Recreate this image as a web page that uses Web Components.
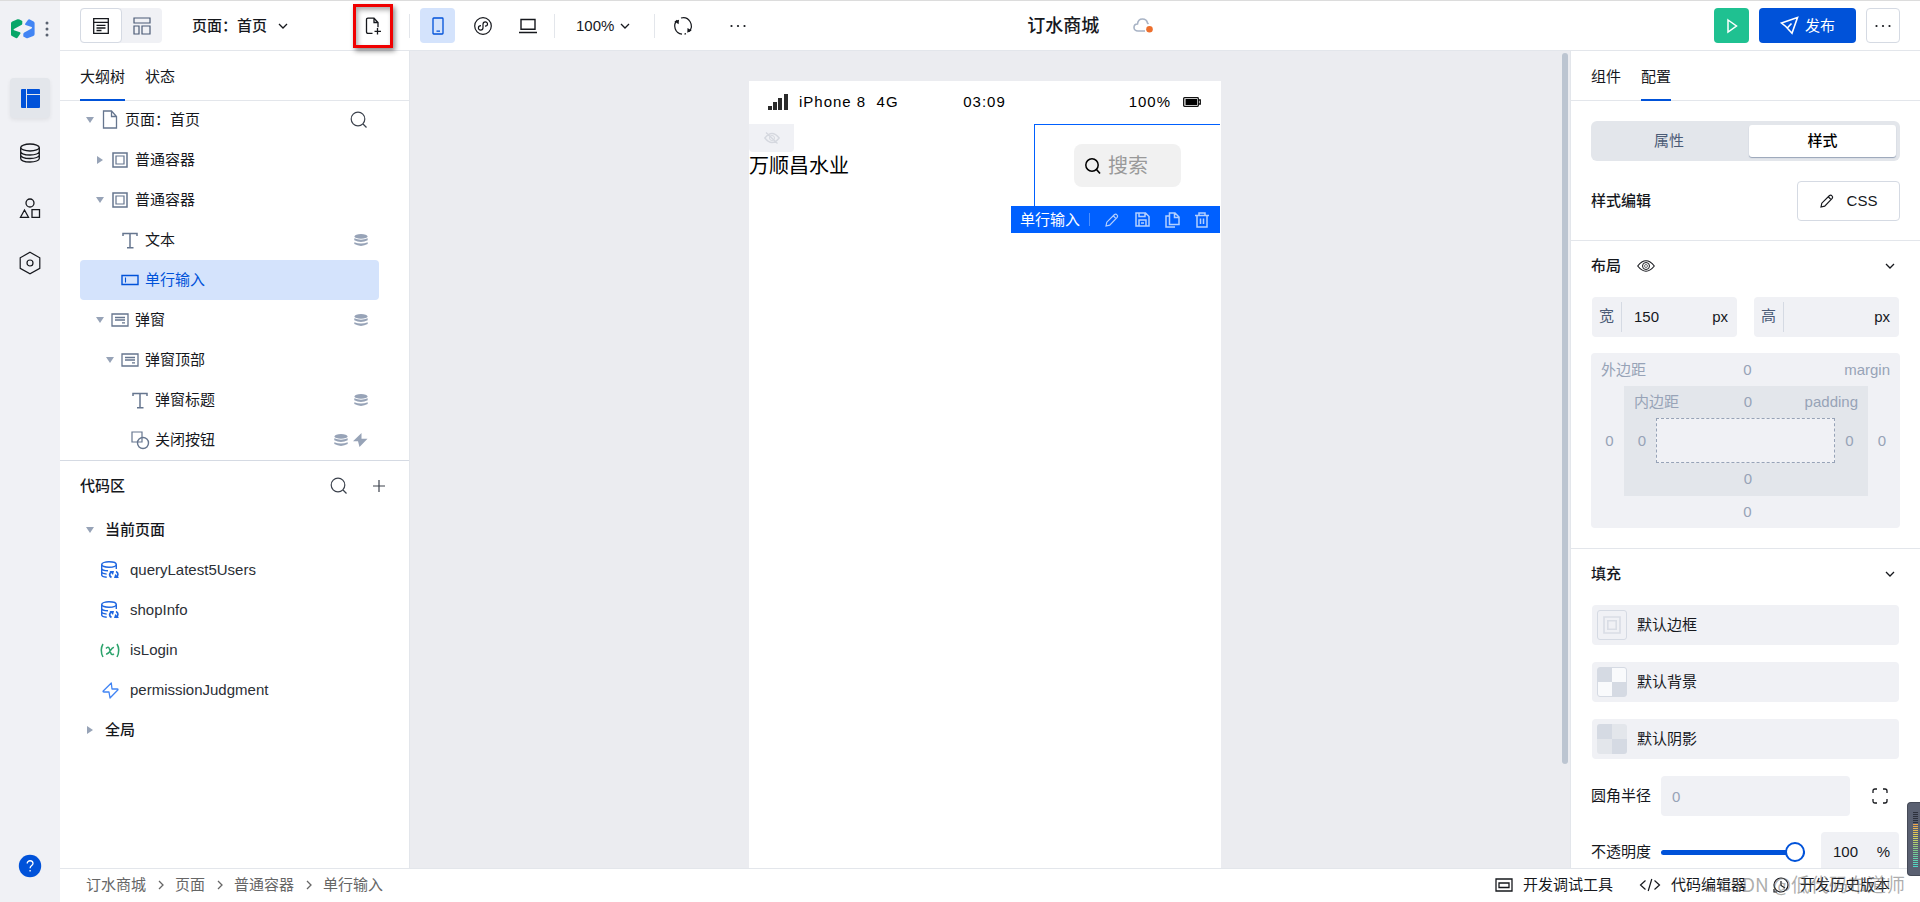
<!DOCTYPE html>
<html lang="zh-CN">
<head>
<meta charset="utf-8">
<title>订水商城</title>
<style>
  html, body { margin: 0; height: 100%; }
  body {
    font: 15px/20px "Liberation Sans", "Noto Sans CJK SC", sans-serif;
    color: #16181d;
    --line: #e3e6eb; --soft: #f0f1f5; --blue: #0052d9; --muted: #97a3b7; --slate: #4b5b76;
    background: #fff;
  }
</style>
</head>
<body>
<low-code-app></low-code-app>
<script>
const LOGO_HALF = 'M0 4.500Q0 3 1.300 2.500L6.500.3Q7.500 0 8.500.5L11.300 2V4.500Q11.300 5.500 10.300 6L3 10Q2 10.800 3 11.300L9 13.300Q10 13.800 9.300 14.800L6.500 18.700Q5.800 19.500 4.800 19L1 17Q0 16.500 0 15.500Z';
const ICONS = {
  logo: [24, 20, `<g stroke="none"><path fill="#07a668" d="${LOGO_HALF}"/><path fill="#4285f4" transform="rotate(180 11.800 9.700)" d="${LOGO_HALF}"/></g>`],
  vdots: [4, 16, '<g fill="currentColor" stroke="none"><circle cx="2" cy="2" r="1.500"/><circle cx="2" cy="8" r="1.500"/><circle cx="2" cy="14" r="1.500"/></g>'],
  layout: [20, 20, '<g fill="currentColor" stroke="none"><path d="M1 2q0-1 1-1h4v19H2q-1 0-1-1z"/><path d="M7 1h12q1 0 1 1v4H7z"/><path d="M7 7h13v12q0 1-1 1H7z"/></g>'],
  database: [22, 20, '<g stroke-width="1.300"><ellipse cx="11" cy="4.500" rx="9.300" ry="3.500"/><path d="M1.700 4.500v11c0 2 4 3.500 9.300 3.500s9.300-1.500 9.300-3.500v-11M1.700 8.500c0 2 4 3.500 9.300 3.500s9.300-1.500 9.300-3.500M1.700 12c0 2 4 3.500 9.300 3.500s9.300-1.500 9.300-3.500"/></g>'],
  shapes: [22, 22, '<g stroke-width="1.300"><circle cx="11" cy="6" r="4"/><path d="M5.500 13 1.500 20.300h8zM13 12.700h7.500v7.600H13z"/></g>'],
  hexagon: [22, 24, '<g stroke-width="1.200"><path d="M11 1.300 20.800 6.800v10.600L11 22.700 1.200 17.400V6.800z"/><circle cx="11" cy="12" r="3"/></g>'],
  help: [24, 24, '<circle cx="12" cy="12" r="11.200" fill="#0052d9" stroke="none"/><path stroke="#fff" stroke-width="1.300" d="M9.200 9.500c0-3.800 5.800-3.500 5.800 0 0 2-2.900 2.300-2.900 4.700M12.100 16v1.500"/>'],
  listView: [16, 16, '<path stroke-width="1.300" d="M.7.700h14.600v14.600H.7zM.7 4.300h14.600M3.500 7.300h9M3.500 10h9M3.500 12.500h5"/>'],
  blocks: [18, 18, '<path stroke-width="1.200" d="M1 1h16v5H1zM1 9h5v8H1zM9 9h8v8H9z"/>'],
  chevron: [10, 10, '<path stroke-width="1.300" d="M1 3l4 4 4-4"/>'],
  chevronRight: [8, 10, '<path stroke-width="1.300" d="M2 1l4 4-4 4"/>'],
  pageAdd: [17, 18, '<path stroke-width="1.300" d="M7.500 16.300H3q-1.500 0-1.500-1.500V2.700Q1.500 1.200 3 1.200h6l4 4.300v4.800M9 1.200v4.300h4M12.500 11v6.500M9.500 14.300H16"/>'],
  phone: [12, 18, '<path stroke-width="1.300" d="M1.700 1h8.600q.7 0 .7.700v14.600q0 .7-.7.700H1.700q-.7 0-.7-.7V1.700Q1 1 1.700 1zM4.500 14.200h3.500"/>'],
  mini: [18, 18, '<circle cx="9" cy="9" r="8.300" stroke-width="1.200"/><path stroke-width="1.200" d="M7 8.700c-3.500 0-3.300 4.400-.4 4.400C8.200 13.100 9 12.100 9 10.700V7.200C9 5.800 9.900 4.900 11.300 4.900c2.900 0 3.100 4.300-.3 4.300"/>'],
  laptop: [18, 16, '<path stroke-width="1.400" d="M2 1.500h14v9.700H2zM0 14.500h18"/>'],
  refresh: [18, 18, '<path stroke-width="1.200" d="M3.200 3.200A8.200 8.200 0 0 0 8 17.200M7 1A8.200 8.200 0 0 1 15 14.600M10.500 17.100l1.500-.4"/><path fill="currentColor" stroke="none" d="M.3 4.200 5 2.700 4.600 7.300zM17.700 13.500l-4.400 2.300.2-4.700z"/>'],
  dots: [16, 4, '<g fill="currentColor" stroke="none"><circle cx="1.500" cy="2" r="1.100"/><circle cx="8" cy="2" r="1.100"/><circle cx="14.500" cy="2" r="1.100"/></g>'],
  cloud: [21, 16, '<path stroke="#a8b3c5" stroke-width="1.600" d="M12 13H5C2.500 13 1 11.500 1 9.500 1 7.500 2.500 6 4.500 6 4.800 3 7 1 9.500 1c2.500 0 4.500 1.700 5 4l1 1"/><circle cx="16.500" cy="11.300" r="3.300" fill="#ed6f2d" stroke="none"/>'],
  play: [12, 16, '<path stroke-width="1.500" d="M2 2l8.500 6L2 14z"/>'],
  send: [19, 19, '<path stroke-width="1.600" d="M17.500 1.500 1.500 7l4.300 3.500L12 17.200zM11.500 7.500l-4.700 5"/>'],
  page: [16, 19, '<path stroke-width="1.300" d="M1.500 1h8L14.500 6.500V18h-13zM9.500 1v5.500h5"/>'],
  container: [16, 16, '<path stroke-width="1.500" d="M1 1h14v14H1z"/><path stroke-width="1.200" d="M4 4h8v8H4z"/>'],
  frame: [18, 18, '<path stroke-width="1.600" d="M1 1h16v16H1zM4.800 4.800h8.400v8.400H4.800z"/>'],
  text: [16, 17, '<path stroke-width="1.500" d="M1 4V1.500h14V4M8 1.500V15.500M5 15.700h6.500"/>'],
  input: [18, 12, '<path stroke-width="1.400" d="M1 1.500h16v9H1z"/><path stroke-width="1.100" d="M4.500 3.500v5"/>'],
  dialog: [18, 14, '<path stroke-width="1.300" d="M1 1h16v12H1z"/><path stroke-width="1.300" d="M4 4.500h10M4 7h10M11 9.800h3"/>'],
  button: [18, 18, '<path stroke-width="1.200" d="M1 1h10v10H1z"/><circle cx="12" cy="12" r="5.500" stroke-width="1.400"/>'],
  down: [8, 6, '<path fill="currentColor" stroke="none" d="M0 0h8L4 6z"/>'],
  right: [6, 8, '<path fill="currentColor" stroke="none" d="M0 0l6 4-6 4z"/>'],
  search: [18, 18, '<circle cx="8" cy="8" r="6.800" stroke-width="1.200"/><path stroke-width="1.200" d="M13 13l3.500 3.500"/>'],
  searchBold: [16, 16, '<circle cx="7" cy="7" r="6.200" stroke-width="1.500"/><path stroke-width="1.600" d="M11.500 11.500 15 15.500"/>'],
  plus: [12, 12, '<path stroke-width="1.200" d="M6 0v12M0 6h12"/>'],
  data: [14, 12, '<g fill="currentColor" stroke="none"><ellipse cx="7" cy="2.400" rx="6.500" ry="2.400"/><path d="M.3 4.300q6.700 2.700 13.400 0v1.900q-6.700 3.600-13.400 0zM.3 8.200q6.700 2.700 13.400 0v1.900q-6.700 3.600-13.400 0z"/></g>'],
  bolt: [16, 14, '<path fill="currentColor" stroke="none" d="M9.500 0 1 8.300h5L7.500 14 15.500 5.700H9.500z"/>'],
  query: [18, 18, '<g stroke="#1f66e0" stroke-width="1.400"><ellipse cx="8" cy="3.500" rx="7.300" ry="2.700"/><path d="M.7 3.500v10.500c0 1 2 2 5 2.300M.7 7.200c0 1.500 2.500 2.500 6.300 2.600M.7 10.800c0 1 2 2 5 2.300M15.300 3.500v4.500"/><path stroke-width="1.800" d="M10.500 16.300c-2.500-1-2.500-4 0-5.300M15 10.500c2.500 1 2.500 4.500 0 6"/><path fill="#1f66e0" stroke="none" d="M8.500 10h4.500l-1 4zM18 17h-5l1.300-4z"/></g>'],
  variable: [20, 15, '<g stroke="#2ca36c" stroke-width="1.500"><path d="M3 1Q-.5 7 3 14M17 1q3.500 6-0 13"/><path d="M6 5.500c1.500-2 3-1.500 3.500.5l1.300 4c.5 2 2 2 3 .7M14 4.500c-3-1-4 7.300-8 6.500"/></g>'],
  event: [17, 17, '<path stroke="#4285f4" stroke-width="1.300" stroke-linejoin="round" d="M9.300 1 1 9.300q0 .7.800.7h5.200L8 16 16 7.700q0-.7-.8-.7H10z"/>'],
  signal: [20, 16, '<g fill="#2b2b2b" stroke="none"><path d="M0 12h4v4H0zM5 8h4v8H5zM10 4h4v12h-4zM16 0h4v16h-4z"/></g>'],
  battery: [18, 10, '<path stroke="#111" stroke-width="1.300" d="M1.500 .7h13q.8 0 .8.8v7q0 .8-.8.8h-13q-.8 0-.8-.8v-7q0-.8.8-.8zM15.500 3h1.800v4h-1.800"/><path fill="#000" stroke="none" d="M2.500 2h11.500v6H2.500z"/>'],
  eyeOff: [16, 12, '<path stroke-width="1.300" d="M.8 6q7.200-9 14.400 0-7.200 9-14.400 0zM2 .5 13.500 11.500"/><circle cx="8" cy="6" r="2.500"/>'],
  eye: [18, 12, '<path stroke-width="1.100" d="M.7 6q8.300-10.500 16.600 0-8.300 10.500-16.600 0z"/><circle cx="9" cy="6" r="3.500" stroke-width="1"/><circle cx="9" cy="6" r="1.500" stroke-width=".600"/>'],
  pencil: [14, 14, '<path stroke-width="1.200" d="M1 13l.8-3.800L9.500 1.500q1.300-1 2.500.3 1.200 1.200.2 2.500L4.700 12.200zM8.500 3l2.800 2.800"/>'],
  save: [15, 15, '<path stroke-width="1.500" d="M1 1h9.500L14 4.500V14H1zM4 1v3.500h6V1M4 14V8h7v6M6 11h3"/>'],
  copy: [15, 16, '<path stroke-width="1.500" d="M4.500 1H10l4 4v7.500H4.500zM9.500 1v4.500H14M4 4H1v11h9"/>'],
  trash: [14, 16, '<path stroke-width="1.500" d="M0 3.500h14M4 3V1h6v2M2 3.500V15h10V3.500M5.500 6.500v5.500M8.500 6.500v5.500"/>'],
  corners: [16, 16, '<path stroke-width="1.300" d="M1 5V3q0-2 2-2h2M11 1h2q2 0 2 2v2M15 11v2q0 2-2 2h-2M5 15H3q-2 0-2-2v-2"/>'],
  console: [18, 14, '<path stroke-width="1.300" d="M1 1h16v12H1zM4 5h10v4.500H4z"/>'],
  code: [22, 14, '<path stroke-width="1.200" d="M6.500 2.500 1.500 7l5 4.500M15.500 2.500l5 4.500-5 4.500M12.800 1 9.200 13"/>'],
  history: [16, 16, '<circle cx="8" cy="8" r="7" stroke-width="1.200"/><path stroke-width="1.200" d="M8 4v4.500l4 2.500M1 12v3h3"/>']
};

function define(name, html) {
  const template = document.createElement('template');
  template.innerHTML = `<style>
    *, :host { box-sizing: border-box; }
    button, input, select { font: inherit; color: inherit; border: 0; margin: 0; padding: 0; background: none; outline: 0; min-width: 0; }
    select { appearance: none; }
    button { display: flex; align-items: center; justify-content: center; cursor: pointer; }
    a { color: inherit; text-decoration: none; }
  </style>` + html;
  customElements.define(name, class extends HTMLElement {
    constructor() {
      super();
      this.attachShadow({ mode: 'open' }).append(template.content.cloneNode(true));
    }
  });
}

customElements.define('ui-icon', class extends HTMLElement {
  connectedCallback() {
    if (this.shadowRoot) return;
    const [w, h, body] = ICONS[this.getAttribute('name')];
    this.attachShadow({ mode: 'open' }).innerHTML = `<style>
      :host { display: inline-flex; align-items: center; justify-content: center; flex: none; }
      svg { display: block; overflow: visible; }
    </style><svg width="${w}" height="${h}" viewBox="0 0 ${w} ${h}" fill="none" stroke="currentColor" aria-hidden="true">${body}</svg>`;
  }
});

define('tree-row', `<style>
  :host { display: flex; align-items: center; height: 40px; flex: none; border-radius: 4px; padding-left: calc(var(--level, 0) * 10px); padding-right: 11px; }
  :host([selected]) { background: #d4e3fc; color: var(--blue); --glyph: var(--blue); }
  .arrow, .icon { display: flex; width: 20px; justify-content: center; color: var(--muted); flex: none; }
  .icon { color: var(--glyph, #66768f); margin-right: 5px; }
  .tail { margin-left: auto; display: flex; gap: 4px; color: var(--muted); }
</style>
<span class="arrow"><slot name="arrow"></slot></span>
<span class="icon"><slot name="icon"></slot></span>
<slot></slot><span class="tail"><slot name="tail"></slot></span>`);

define('tab-strip', `<style>
  :host { display: flex; gap: 20px; height: 50px; padding: 0 20px; border-bottom: 1px solid var(--line); flex: none; }
  ::slotted(button) { font: inherit; border: 0; background: none; padding: 4px 0 0 !important; height: 50px; color: var(--slate); border-bottom: 2px solid transparent !important; cursor: pointer; }
  ::slotted(button[aria-selected="true"]) { color: #16181d; font-weight: 500; border-bottom-color: var(--blue) !important; }
</style><slot></slot>`);

define('app-rail', `<style>
  :host { display: flex; flex-direction: column; align-items: center; background: var(--soft); padding: 17px 0 24px; gap: 15px; }
  .brand { display: flex; align-items: center; gap: 10px; height: 22px; color: #5a6270; margin-bottom: 23px; }
  button { width: 40px; height: 40px; border-radius: 4px; }
  .on { background: #e3e6eb; color: var(--blue); box-shadow: 0 2px 4px #0001; }
  .help { margin-top: auto; height: 24px; }
</style>
<div class="brand"><ui-icon name="logo"></ui-icon><ui-icon name="vdots"></ui-icon></div>
<button class="on" aria-label="设计"><ui-icon name="layout"></ui-icon></button>
<button aria-label="数据"><ui-icon name="database"></ui-icon></button>
<button aria-label="素材"><ui-icon name="shapes"></ui-icon></button>
<button aria-label="设置"><ui-icon name="hexagon"></ui-icon></button>
<button class="help" aria-label="帮助"><ui-icon name="help"></ui-icon></button>`);

define('top-bar', `<style>
  :host { display: grid; grid-template-columns: 52% auto 1fr; align-items: center; height: 50px; border-bottom: 1px solid var(--line); }
  .left, .right, .views, .pick, .mid, .devices, .page { display: flex; align-items: center; }
  .left { padding-left: 20px; }
  .views { background: var(--soft); border-radius: 4px; height: 35px; }
  .views button { width: 40px; height: 35px; color: var(--slate); }
  .views .on { width: 42px; border: 1px solid #d5dae3; border-radius: 4px; background: #fff; color: #16181d; }
  .page { width: 247px; justify-content: space-between; padding-left: 30px; padding-right: 16px; }
  .pick { gap: 10px; }
  .page select { font-weight: 500; }
  .add { width: 40px; height: 44px; border: 3px solid #f00000; box-shadow: 2px 3px 5px #0007, inset 2px 3px 5px #0005; }
  .devices { border-left: 1px solid var(--line); height: 24px; padding: 0 9px 0 10px; gap: 10px; }
  .devices button { width: 35px; height: 35px; border-radius: 4px; }
  .devices .on { background: #d4e3fc; color: var(--blue); }
  .zoom { border-inline: 1px solid var(--line); height: 24px; padding: 0 24px 0 21px; gap: 5px; }
  .mid { gap: 34px; font-size: 18px; font-weight: 500; }
  .right { justify-content: flex-end; gap: 10px; padding-right: 20px; }
  .right button { height: 35px; border-radius: 4px; width: 35px; }
  .right .play { background: #1fc191; color: #fff; }
  .right .send { background: var(--blue); color: #fff; width: 97px; gap: 6px; }
  .right .more { border: 1px solid #d5dae3; width: 34px; }
  .ghost { width: 55px; height: 35px; }
</style>
<div class="left">
  <div class="views"><button class="on" aria-label="列表视图"><ui-icon name="listView"></ui-icon></button><button aria-label="布局视图"><ui-icon name="blocks"></ui-icon></button></div>
  <div class="page"><span class="pick"><select aria-label="页面"><option>页面：首页</option></select><ui-icon name="chevron"></ui-icon></span>
    <button class="add" aria-label="新建页面"><ui-icon name="pageAdd"></ui-icon></button></div>
  <div class="devices">
    <button class="on" aria-label="手机"><ui-icon name="phone"></ui-icon></button>
    <button aria-label="小程序"><ui-icon name="mini"></ui-icon></button>
    <button aria-label="电脑"><ui-icon name="laptop"></ui-icon></button>
  </div>
  <div class="pick zoom"><select aria-label="缩放"><option>100%</option></select><ui-icon name="chevron"></ui-icon></div>
  <button class="ghost" aria-label="刷新"><ui-icon name="refresh"></ui-icon></button>
  <button class="ghost" aria-label="更多操作"><ui-icon name="dots"></ui-icon></button>
</div>
<div class="mid"><span>订水商城</span><ui-icon name="cloud"></ui-icon></div>
<div class="right">
  <button class="play" aria-label="预览"><ui-icon name="play"></ui-icon></button>
  <button class="send"><ui-icon name="send"></ui-icon>发布</button>
  <button class="more" aria-label="更多"><ui-icon name="dots"></ui-icon></button>
</div>`);

define('outline-panel', `<style>
  :host { display: block; border-bottom: 1px solid #d5dae3; }
  .tree { display: flex; flex-direction: column; padding: 0 30px 0 20px; }
  .root { height: 39px; padding-bottom: 2px; }
  .find { color: #3c424d; }
  .l1 { --level: 1; } .l2 { --level: 2; } .l3 { --level: 3; }
</style>
<tab-strip><button aria-selected="true">大纲树</button><button>状态</button></tab-strip>
<div class="tree">
  <tree-row class="root"><ui-icon slot="arrow" name="down"></ui-icon><ui-icon slot="icon" name="page"></ui-icon>页面：首页<ui-icon class="find" slot="tail" name="search"></ui-icon></tree-row>
  <tree-row class="l1"><ui-icon slot="arrow" name="right"></ui-icon><ui-icon slot="icon" name="container"></ui-icon>普通容器</tree-row>
  <tree-row class="l1"><ui-icon slot="arrow" name="down"></ui-icon><ui-icon slot="icon" name="container"></ui-icon>普通容器</tree-row>
  <tree-row class="l2"><ui-icon slot="icon" name="text"></ui-icon>文本<ui-icon slot="tail" name="data"></ui-icon></tree-row>
  <tree-row class="l2" selected><ui-icon slot="icon" name="input"></ui-icon>单行输入</tree-row>
  <tree-row class="l1"><ui-icon slot="arrow" name="down"></ui-icon><ui-icon slot="icon" name="dialog"></ui-icon>弹窗<ui-icon slot="tail" name="data"></ui-icon></tree-row>
  <tree-row class="l2"><ui-icon slot="arrow" name="down"></ui-icon><ui-icon slot="icon" name="dialog"></ui-icon>弹窗顶部</tree-row>
  <tree-row class="l3"><ui-icon slot="icon" name="text"></ui-icon>弹窗标题<ui-icon slot="tail" name="data"></ui-icon></tree-row>
  <tree-row class="l3"><ui-icon slot="icon" name="button"></ui-icon>关闭按钮<ui-icon slot="tail" name="data"></ui-icon><ui-icon slot="tail" name="bolt"></ui-icon></tree-row>
</div>`);

define('code-panel', `<style>
  :host { display: block; padding: 0 20px; }
  header { display: flex; align-items: center; height: 49px; font-weight: 500; gap: 20px; }
  header span { margin-right: auto; }
  header button { width: 20px; height: 20px; color: #3c424d; }
  h3, a { display: flex; align-items: center; height: 40px; margin: 0; font-size: 15px; }
  h3 { font-weight: 500; }
  h3 ui-icon { width: 20px; margin-right: 5px; color: var(--muted); }
  a ui-icon { width: 20px; margin: 0 10px 0 20px; }
  a { color: #2b2f36; }
</style>
<header><span>代码区</span><button aria-label="搜索"><ui-icon name="search"></ui-icon></button><button aria-label="新建"><ui-icon name="plus"></ui-icon></button></header>
<h3><ui-icon name="down"></ui-icon>当前页面</h3>
<a href="#q1"><ui-icon name="query"></ui-icon>queryLatest5Users</a>
<a href="#q2"><ui-icon name="query"></ui-icon>shopInfo</a>
<a href="#v1"><ui-icon name="variable"></ui-icon>isLogin</a>
<a href="#e1"><ui-icon name="event"></ui-icon>permissionJudgment</a>
<h3><ui-icon name="right"></ui-icon>全局</h3>`);

define('phone-preview', `<style>
  :host { display: flex; flex-direction: column; width: 472px; background: #fff; color: #000; }
  .status { display: grid; grid-template-columns: 1fr auto 1fr; align-items: center; height: 43px; padding: 0 20px 2px 19px; letter-spacing: 1px; }
  .status > span { display: flex; align-items: center; }
  .net { gap: 11px; } .charge { justify-content: flex-end; gap: 12px; }
  .content { display: flex; justify-content: space-between; align-items: flex-start; padding-right: 1px; }
  .hidden { display: flex; align-items: center; justify-content: center; width: 45px; height: 28px; background: var(--soft); color: #d5d8df; border-radius: 0 0 4px 4px; }
  .name { font-size: 20px; line-height: 28px; }
  .selected { position: relative; width: 186px; height: 83px; border: 1px solid #0060ff; border-right: 0; padding: 19px 39px; }
  .box { display: flex; align-items: center; gap: 7px; height: 43px; padding: 0 11px; border-radius: 8px; background: #f1f1f1; }
  .box input { width: 100%; font-size: 20px; line-height: 28px; }
  .box input::placeholder { color: #999; opacity: 1; }
  .tools { position: absolute; right: 0; top: 100%; display: flex; align-items: center; gap: 14px; width: 209px; height: 27px; padding: 0 10px 0 9px; background: #0060ff; color: #b3cfff; }
  .tools span { color: #fff; padding-right: 9px; border-right: 1px solid #4d90ff; line-height: 13px; white-space: nowrap; }
  .tools button { width: 16px; height: 16px; }
</style>
<div class="status"><span class="net"><ui-icon name="signal"></ui-icon><span>iPhone 8 &nbsp;4G</span></span><span>03:09</span><span class="charge">100%<ui-icon name="battery"></ui-icon></span></div>
<div class="content">
  <div><div class="hidden"><ui-icon name="eyeOff"></ui-icon></div><div class="name">万顺昌水业</div></div>
  <div class="selected">
    <label class="box"><ui-icon name="searchBold"></ui-icon><input type="text" placeholder="搜索" aria-label="搜索"></label>
    <div class="tools"><span>单行输入</span><button aria-label="编辑"><ui-icon name="pencil"></ui-icon></button><button aria-label="保存"><ui-icon name="save"></ui-icon></button><button aria-label="复制"><ui-icon name="copy"></ui-icon></button><button aria-label="删除"><ui-icon name="trash"></ui-icon></button></div>
  </div>
</div>`);

define('design-canvas', `<style>
  :host { display: grid; grid-template-columns: 1fr 10px; background: #ebecf0; border-left: 1px solid var(--line); overflow: hidden; }
  .stage { display: flex; justify-content: center; padding-top: 30px; }
  .bar { width: 6px; height: 87%; border-radius: 3px; background: #bcc5d1; margin: 2px 2px 0; }
</style><div class="stage"><slot></slot></div><div class="bar"></div>`);

define('style-panel', `<style>
  :host { display: block; border-left: 1px solid var(--line); overflow: hidden; }
  section { padding: 0 20px; border-bottom: 1px solid var(--line); }
  section:last-child { border: 0; }
  .seg { display: grid; grid-template-columns: 154px 1fr; height: 40px; padding: 4px; margin: 20px 0; border-radius: 6px; background: #e3e6eb; }
  .seg button { color: var(--slate); border-radius: 3px; padding-right: 6px; }
  .seg .on { background: #fff; color: #000; font-weight: 500; padding: 0; box-shadow: 0 1px 1px #97a3b7; }
  .css { display: flex; justify-content: space-between; align-items: center; padding-bottom: 19px; font-weight: 500; }
  .css button { width: 103px; height: 40px; border: 1px solid #d5dae3; border-radius: 4px; gap: 13px; font-weight: 400; }
  h3 { display: flex; align-items: center; height: 20px; margin: 0; font-size: 15px; font-weight: 500; gap: 16px; }
  h3 .fold { margin-left: auto; margin-right: 5px; width: 10px; }
  .layout { padding-top: 15px; padding-bottom: 20px; }
  .pair { display: grid; grid-template-columns: 1fr 1fr; gap: 17px; padding: 21px 1px 16px; }
  .field { display: flex; align-items: center; height: 40px; border-radius: 4px; background: var(--soft); padding-right: 9px; }
  .field b { font-weight: 400; color: var(--slate); height: 30px; line-height: 28px; width: 30px; text-align: center; border-right: 1px solid #d5dae3; margin-right: 12px; flex: none; }
  .field input { flex: 1; width: 0; }
  .model { color: var(--muted); background: var(--soft); border-radius: 4px; }
  .edge { display: grid; grid-template-columns: 33px 1fr 32px; text-align: center; }
  .edge > i { font-style: normal; align-self: center; padding-left: 4px; }
  .edge > div + i { padding: 0 4px 0 0; }
  .edge > .head + i { padding: 0 0 0 4px; }
  .head { grid-column: 1 / 4; display: grid; grid-template-columns: 1fr auto 1fr; height: 33px; align-items: center; padding: 0 10px; text-align: left; }
  .head > :nth-child(2) { padding-left: 4px; }
  .head > :last-child { text-align: right; }
  .foot { grid-column: 1 / 4; height: 32px; line-height: 32px; padding-left: 4px; }
  .inner { background: #e3e6eb; grid-template-columns: 32px 1fr 33px; }
  .inner .head { height: 32px; } .inner .foot { height: 33px; }
  .core { height: 45px; border: 1px dashed var(--muted); background: var(--soft); }
  .fill { padding-top: 15px; display: grid; }
  .rows { display: grid; gap: 17px; padding: 21px 1px 1px; }
  .rows button { height: 40px; justify-content: flex-start; gap: 10px; padding: 0 5px; border-radius: 4px; background: var(--soft); }
  .sw { width: 30px; height: 30px; border: 1px solid #d5dae3; border-radius: 3px; display: flex; align-items: center; justify-content: center; color: #d9dde5; }
  .bg { background: conic-gradient(#f9fafc 25%, #d5dae3 0 50%, #f9fafc 0 75%, #d5dae3 0); }
  .sh { border: 0; background: conic-gradient(#e3e6eb 25%, #d5dae3 0 50%, #e3e6eb 0 75%, #d5dae3 0); }
  .line { display: grid; grid-template-columns: 60px 1fr auto; gap: 10px; height: 40px; margin-top: 16px; align-items: center; }
  .radius { width: 100%; height: 40px; padding: 0 11px; border-radius: 4px; background: var(--soft); }
  .radius::placeholder { color: var(--muted); opacity: 1; }
  .line > button { width: 40px; height: 40px; }
  .line .field { width: 78px; padding-left: 12px; margin-right: 1px; margin-left: 6px; }
  input[type=range] { appearance: none; width: 100%; height: 20px; }
  input[type=range]::-webkit-slider-runnable-track { height: 5px; border-radius: 3px; background: var(--blue); }
  input[type=range]::-webkit-slider-thumb { appearance: none; width: 20px; height: 20px; margin-top: -8px; border: 2px solid var(--blue); border-radius: 50%; background: #fff; }
</style>
<tab-strip><button>组件</button><button aria-selected="true">配置</button></tab-strip>
<section>
  <div class="seg"><button>属性</button><button class="on">样式</button></div>
  <div class="css">样式编辑<button><ui-icon name="pencil"></ui-icon>CSS</button></div>
</section>
<section class="layout">
  <h3>布局<ui-icon name="eye"></ui-icon><ui-icon class="fold" name="chevron"></ui-icon></h3>
  <div class="pair">
    <label class="field"><b>宽</b><input type="text" value="150"><span>px</span></label>
    <label class="field"><b>高</b><input type="text"><span>px</span></label>
  </div>
  <div class="edge model">
    <div class="head"><span>外边距</span><span>0</span><span>margin</span></div>
    <i>0</i>
    <div class="edge inner">
      <div class="head"><span>内边距</span><span>0</span><span>padding</span></div>
      <i>0</i><div class="core"></div><i>0</i>
      <div class="foot">0</div>
    </div>
    <i>0</i>
    <div class="foot">0</div>
  </div>
</section>
<section class="fill">
  <h3>填充<ui-icon class="fold" name="chevron"></ui-icon></h3>
  <div class="rows">
    <button><span class="sw"><ui-icon name="frame"></ui-icon></span>默认边框</button>
    <button><span class="sw bg"></span>默认背景</button>
    <button><span class="sw sh"></span>默认阴影</button>
  </div>
  <div class="line"><label for="radius">圆角半径</label><input class="radius" id="radius" type="text" placeholder="0"><button aria-label="分别设置圆角"><ui-icon name="corners"></ui-icon></button></div>
  <div class="line"><label for="opacity">不透明度</label><input id="opacity" type="range" value="100"><label class="field"><input type="text" value="100" aria-label="不透明度"><span>%</span></label></div>
</section>`);

define('status-footer', `<style>
  :host { display: flex; justify-content: space-between; align-items: flex-start; height: 34px; padding: 6px 30px 0 26px; border-top: 1px solid var(--line); background: #fff; }
  nav, div { display: flex; align-items: center; }
  nav { gap: 10px; color: #666; }
  div { gap: 26px; }
  button { gap: 10px; height: 20px; }
  button ui-icon { min-width: 18px; }
  nav ui-icon { width: 9px; }
</style>
<nav aria-label="路径"><a href="#app">订水商城</a><ui-icon name="chevronRight"></ui-icon><a href="#page">页面</a><ui-icon name="chevronRight"></ui-icon><a href="#box">普通容器</a><ui-icon name="chevronRight"></ui-icon><a href="#input">单行输入</a></nav>
<div><button><ui-icon name="console"></ui-icon>开发调试工具</button><button><ui-icon name="code"></ui-icon>代码编辑器</button><button><ui-icon name="history"></ui-icon>开发历史版本</button></div>`);

define('level-meter', `<style>
  :host { display: block; width: 13px; height: 74px; padding: 9px 2px 8px 5px; border-radius: 4px 0 0 4px; border: 1px solid #454a57; border-right: 0; background: #5a6071; }
  i { display: block; height: 100%; background: repeating-linear-gradient(#0000 0 1px, #5a6071 1px 2px), linear-gradient(#2c303c 20%, #f0a24a 21%, #d8d45a 45%, #7cc98a 70%, #4cd8c8); }
</style><i></i>`);

define('low-code-app', `<style>
  :host { display: grid; grid-template: 50px minmax(0, 1fr) 34px / 60px 349px minmax(0, 1fr) 350px; height: 100vh; min-height: 600px; border-top: 1px solid #dcdcdc; position: relative; overflow: hidden; }
  app-rail { grid-row: 1 / 4; }
  top-bar, status-footer { grid-column: 2 / 5; }
  .side { overflow: hidden; }
  level-meter { position: absolute; right: 0; bottom: 26px; }
  .mark { position: absolute; right: 15px; bottom: 4px; font: 19px/28px "Noto Sans CJK SC", sans-serif; color: #6668; pointer-events: none; }
</style>
<app-rail></app-rail>
<top-bar></top-bar>
<div class="side"><outline-panel></outline-panel><code-panel></code-panel></div>
<design-canvas><phone-preview></phone-preview></design-canvas>
<style-panel></style-panel>
<status-footer></status-footer>
<level-meter></level-meter>
<span class="mark">CSDN @低代码布道师</span>`);
</script>
</body>
</html>
